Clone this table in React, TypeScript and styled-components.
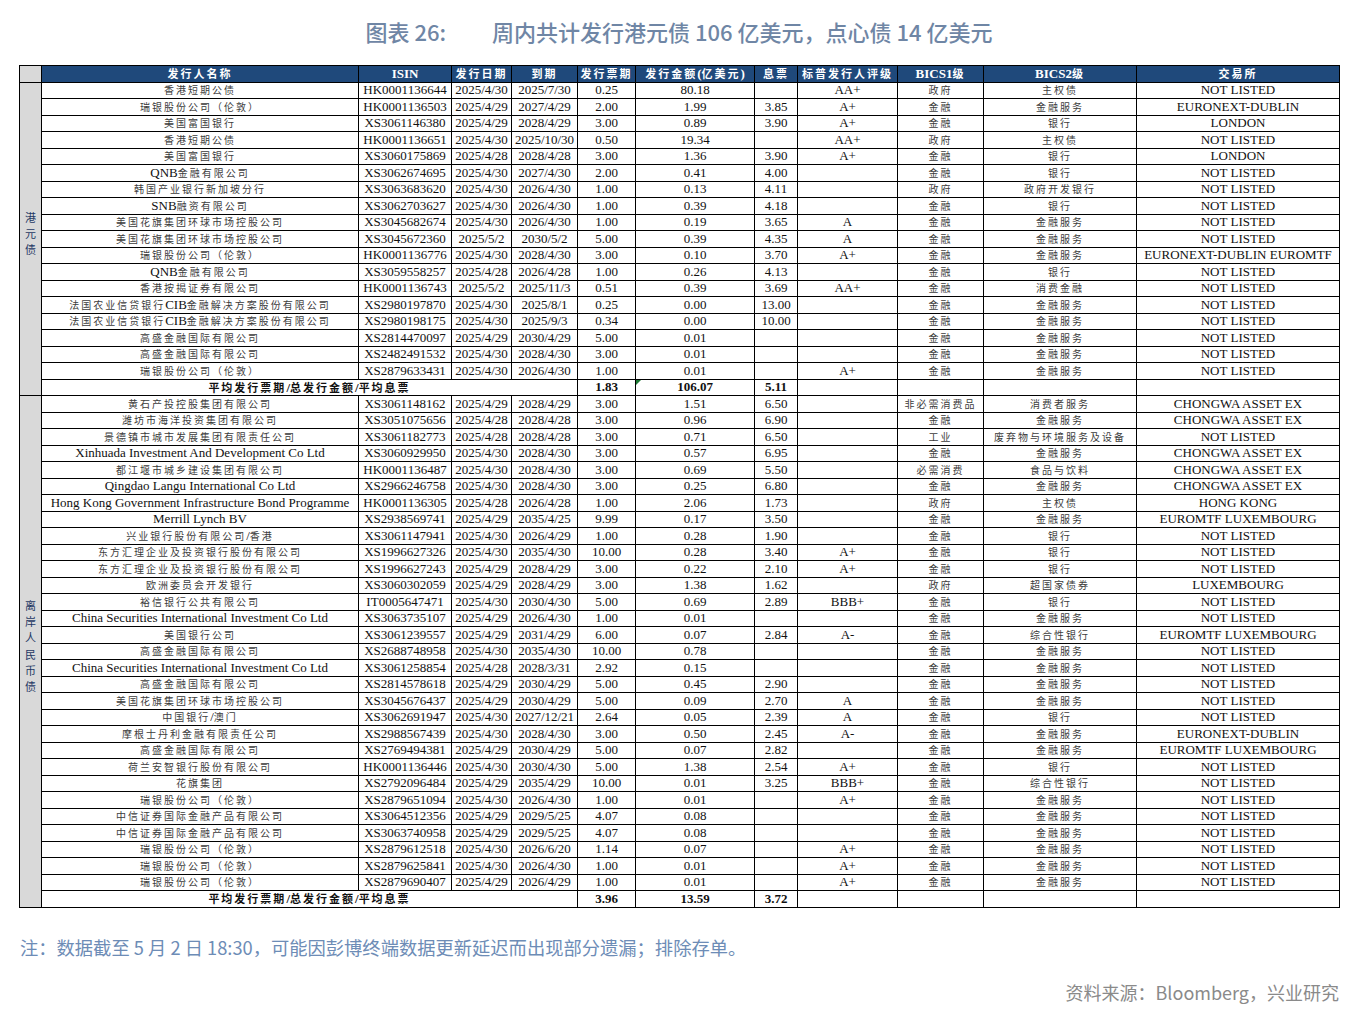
import React from "react";
import styled, { createGlobalStyle } from "styled-components";

const GlobalStyle = createGlobalStyle`
  html, body { margin: 0; padding: 0; background: #ffffff; }
  * { box-sizing: border-box; }
`;

const Page = styled.div`
  width: 1354px;
  padding: 0 15px 0 19px;
  display: flex;
  flex-direction: column;
`;

const Title = styled.div`
  display: flex;
  justify-content: center;
  gap: 46px;
  padding-top: 16px;
  line-height: 30px;
  height: 46px;
  font-family: "Noto Sans CJK SC", "Noto Sans", sans-serif;
  font-size: 22px;
  font-weight: 500;
  color: #6f86a5;
  white-space: pre;
`;

const Table = styled.table`
  margin-top: 19px;
  width: 1320px;
  border-collapse: collapse;
  table-layout: fixed;
  font-family: "Liberation Serif", "Times New Roman", serif;
  font-size: 13px;
  color: #111;
`;

const Row = styled.tr`
  height: 16.5px;
`;

const Th = styled.th<{ $corner?: boolean }>`
  border: 1px solid #000;
  background: ${(p) => (p.$corner ? "#d9d9d9" : "#1f497b")};
  color: #fff;
  font-weight: 700;
  padding: 0;
  line-height: 14px;
  text-align: center;
  white-space: nowrap;
  overflow: hidden;
`;

const Td = styled.td<{ $bold?: boolean }>`
  position: relative;
  border: 1px solid #000;
  padding: 0;
  line-height: 14px;
  text-align: center;
  white-space: nowrap;
  overflow: hidden;
  font-weight: ${(p) => (p.$bold ? 700 : 400)};
`;

const CatCell = styled.td`
  border: 1px solid #000;
  background: #d9d9d9;
  padding: 0;
  text-align: center;
  vertical-align: middle;
`;

const CatLabel = styled.span`
  display: inline-block;
  writing-mode: vertical-rl;
  text-orientation: upright;
  font-family: "Noto Sans CJK SC", sans-serif;
  font-size: 11px;
  letter-spacing: 5.3px;
  color: #1f3864;
  line-height: 12px;
`;

const Cjk = styled.span<{ $head?: boolean }>`
  font-family: "Noto Sans CJK SC", sans-serif;
  font-size: ${(p) => (p.$head ? "11px" : "10px")};
  letter-spacing: 2px;
  color: ${(p) => (p.$head ? "inherit" : "#3c3c3c")};
`;

const Flag = styled.span`
  position: absolute;
  top: 0;
  left: 0;
  width: 0;
  height: 0;
  border-top: 5px solid #1d7a34;
  border-right: 5px solid transparent;
`;

const Note = styled.div`
  margin-top: 27px;
  line-height: 24px;
  font-family: "Noto Sans CJK SC", "Noto Sans", sans-serif;
  font-size: 18.3px;
  color: #6d8cb6;
  padding-left: 1px;
`;

const Source = styled.div`
  margin-top: 21px;
  line-height: 24px;
  text-align: right;
  font-family: "Noto Sans CJK SC", "Noto Sans", sans-serif;
  font-size: 18px;
  color: #8a8a8a;
`;

const CJK_RE = /([\u3000-\u303f\u3400-\u9fff\uff00-\uffef]+)/;

function Mixed({ text, head }: { text: string; head?: boolean }) {
  const parts = text.split(CJK_RE);
  return (
    <>
      {parts.map((p, i) =>
        i % 2 === 1 ? (
          <Cjk key={i} $head={head}>
            {p}
          </Cjk>
        ) : (
          <React.Fragment key={i}>{p}</React.Fragment>
        )
      )}
    </>
  );
}

type R = [string, string, string, string, string, string, string, string, string, string, string];

const hk: R[] = [
  ["香港短期公债", "HK0001136644", "2025/4/30", "2025/7/30", "0.25", "80.18", "", "AA+", "政府", "主权债", "NOT LISTED"],
  ["瑞银股份公司（伦敦）", "HK0001136503", "2025/4/29", "2027/4/29", "2.00", "1.99", "3.85", "A+", "金融", "金融服务", "EURONEXT-DUBLIN"],
  ["美国富国银行", "XS3061146380", "2025/4/29", "2028/4/29", "3.00", "0.89", "3.90", "A+", "金融", "银行", "LONDON"],
  ["香港短期公债", "HK0001136651", "2025/4/30", "2025/10/30", "0.50", "19.34", "", "AA+", "政府", "主权债", "NOT LISTED"],
  ["美国富国银行", "XS3060175869", "2025/4/28", "2028/4/28", "3.00", "1.36", "3.90", "A+", "金融", "银行", "LONDON"],
  ["QNB金融有限公司", "XS3062674695", "2025/4/30", "2027/4/30", "2.00", "0.41", "4.00", "", "金融", "银行", "NOT LISTED"],
  ["韩国产业银行新加坡分行", "XS3063683620", "2025/4/30", "2026/4/30", "1.00", "0.13", "4.11", "", "政府", "政府开发银行", "NOT LISTED"],
  ["SNB融资有限公司", "XS3062703627", "2025/4/30", "2026/4/30", "1.00", "0.39", "4.18", "", "金融", "银行", "NOT LISTED"],
  ["美国花旗集团环球市场控股公司", "XS3045682674", "2025/4/30", "2026/4/30", "1.00", "0.19", "3.65", "A", "金融", "金融服务", "NOT LISTED"],
  ["美国花旗集团环球市场控股公司", "XS3045672360", "2025/5/2", "2030/5/2", "5.00", "0.39", "4.35", "A", "金融", "金融服务", "NOT LISTED"],
  ["瑞银股份公司（伦敦）", "HK0001136776", "2025/4/30", "2028/4/30", "3.00", "0.10", "3.70", "A+", "金融", "金融服务", "EURONEXT-DUBLIN EUROMTF"],
  ["QNB金融有限公司", "XS3059558257", "2025/4/28", "2026/4/28", "1.00", "0.26", "4.13", "", "金融", "银行", "NOT LISTED"],
  ["香港按揭证券有限公司", "HK0001136743", "2025/5/2", "2025/11/3", "0.51", "0.39", "3.69", "AA+", "金融", "消费金融", "NOT LISTED"],
  ["法国农业信贷银行CIB金融解决方案股份有限公司", "XS2980197870", "2025/4/30", "2025/8/1", "0.25", "0.00", "13.00", "", "金融", "金融服务", "NOT LISTED"],
  ["法国农业信贷银行CIB金融解决方案股份有限公司", "XS2980198175", "2025/4/30", "2025/9/3", "0.34", "0.00", "10.00", "", "金融", "金融服务", "NOT LISTED"],
  ["高盛金融国际有限公司", "XS2814470097", "2025/4/29", "2030/4/29", "5.00", "0.01", "", "", "金融", "金融服务", "NOT LISTED"],
  ["高盛金融国际有限公司", "XS2482491532", "2025/4/30", "2028/4/30", "3.00", "0.01", "", "", "金融", "金融服务", "NOT LISTED"],
  ["瑞银股份公司（伦敦）", "XS2879633431", "2025/4/30", "2026/4/30", "1.00", "0.01", "", "A+", "金融", "金融服务", "NOT LISTED"],
];

const cnh: R[] = [
  ["黄石产投控股集团有限公司", "XS3061148162", "2025/4/29", "2028/4/29", "3.00", "1.51", "6.50", "", "非必需消费品", "消费者服务", "CHONGWA ASSET EX"],
  ["潍坊市海洋投资集团有限公司", "XS3051075656", "2025/4/28", "2028/4/28", "3.00", "0.96", "6.90", "", "金融", "金融服务", "CHONGWA ASSET EX"],
  ["景德镇市城市发展集团有限责任公司", "XS3061182773", "2025/4/28", "2028/4/28", "3.00", "0.71", "6.50", "", "工业", "废弃物与环境服务及设备", "NOT LISTED"],
  ["Xinhuada Investment And Development Co Ltd", "XS3060929950", "2025/4/30", "2028/4/30", "3.00", "0.57", "6.95", "", "金融", "金融服务", "CHONGWA ASSET EX"],
  ["都江堰市城乡建设集团有限公司", "HK0001136487", "2025/4/30", "2028/4/30", "3.00", "0.69", "5.50", "", "必需消费", "食品与饮料", "CHONGWA ASSET EX"],
  ["Qingdao Langu International Co Ltd", "XS2966246758", "2025/4/30", "2028/4/30", "3.00", "0.25", "6.80", "", "金融", "金融服务", "CHONGWA ASSET EX"],
  ["Hong Kong Government Infrastructure Bond Programme", "HK0001136305", "2025/4/28", "2026/4/28", "1.00", "2.06", "1.73", "", "政府", "主权债", "HONG KONG"],
  ["Merrill Lynch BV", "XS2938569741", "2025/4/29", "2035/4/25", "9.99", "0.17", "3.50", "", "金融", "金融服务", "EUROMTF LUXEMBOURG"],
  ["兴业银行股份有限公司/香港", "XS3061147941", "2025/4/30", "2026/4/29", "1.00", "0.28", "1.90", "", "金融", "银行", "NOT LISTED"],
  ["东方汇理企业及投资银行股份有限公司", "XS1996627326", "2025/4/30", "2035/4/30", "10.00", "0.28", "3.40", "A+", "金融", "银行", "NOT LISTED"],
  ["东方汇理企业及投资银行股份有限公司", "XS1996627243", "2025/4/29", "2028/4/29", "3.00", "0.22", "2.10", "A+", "金融", "银行", "NOT LISTED"],
  ["欧洲委员会开发银行", "XS3060302059", "2025/4/29", "2028/4/29", "3.00", "1.38", "1.62", "", "政府", "超国家债券", "LUXEMBOURG"],
  ["裕信银行公共有限公司", "IT0005647471", "2025/4/30", "2030/4/30", "5.00", "0.69", "2.89", "BBB+", "金融", "银行", "NOT LISTED"],
  ["China Securities International Investment Co Ltd", "XS3063735107", "2025/4/29", "2026/4/30", "1.00", "0.01", "", "", "金融", "金融服务", "NOT LISTED"],
  ["美国银行公司", "XS3061239557", "2025/4/29", "2031/4/29", "6.00", "0.07", "2.84", "A-", "金融", "综合性银行", "EUROMTF LUXEMBOURG"],
  ["高盛金融国际有限公司", "XS2688748958", "2025/4/30", "2035/4/30", "10.00", "0.78", "", "", "金融", "金融服务", "NOT LISTED"],
  ["China Securities International Investment Co Ltd", "XS3061258854", "2025/4/28", "2028/3/31", "2.92", "0.15", "", "", "金融", "金融服务", "NOT LISTED"],
  ["高盛金融国际有限公司", "XS2814578618", "2025/4/29", "2030/4/29", "5.00", "0.45", "2.90", "", "金融", "金融服务", "NOT LISTED"],
  ["美国花旗集团环球市场控股公司", "XS3045676437", "2025/4/29", "2030/4/29", "5.00", "0.09", "2.70", "A", "金融", "金融服务", "NOT LISTED"],
  ["中国银行/澳门", "XS3062691947", "2025/4/30", "2027/12/21", "2.64", "0.05", "2.39", "A", "金融", "银行", "NOT LISTED"],
  ["摩根士丹利金融有限责任公司", "XS2988567439", "2025/4/30", "2028/4/30", "3.00", "0.50", "2.45", "A-", "金融", "金融服务", "EURONEXT-DUBLIN"],
  ["高盛金融国际有限公司", "XS2769494381", "2025/4/29", "2030/4/29", "5.00", "0.07", "2.82", "", "金融", "金融服务", "EUROMTF LUXEMBOURG"],
  ["荷兰安智银行股份有限公司", "HK0001136446", "2025/4/30", "2030/4/30", "5.00", "1.38", "2.54", "A+", "金融", "银行", "NOT LISTED"],
  ["花旗集团", "XS2792096484", "2025/4/29", "2035/4/29", "10.00", "0.01", "3.25", "BBB+", "金融", "综合性银行", "NOT LISTED"],
  ["瑞银股份公司（伦敦）", "XS2879651094", "2025/4/30", "2026/4/30", "1.00", "0.01", "", "A+", "金融", "金融服务", "NOT LISTED"],
  ["中信证券国际金融产品有限公司", "XS3064512356", "2025/4/29", "2029/5/25", "4.07", "0.08", "", "", "金融", "金融服务", "NOT LISTED"],
  ["中信证券国际金融产品有限公司", "XS3063740958", "2025/4/29", "2029/5/25", "4.07", "0.08", "", "", "金融", "金融服务", "NOT LISTED"],
  ["瑞银股份公司（伦敦）", "XS2879612518", "2025/4/30", "2026/6/20", "1.14", "0.07", "", "A+", "金融", "金融服务", "NOT LISTED"],
  ["瑞银股份公司（伦敦）", "XS2879625841", "2025/4/30", "2026/4/30", "1.00", "0.01", "", "A+", "金融", "金融服务", "NOT LISTED"],
  ["瑞银股份公司（伦敦）", "XS2879690407", "2025/4/29", "2026/4/29", "1.00", "0.01", "", "A+", "金融", "金融服务", "NOT LISTED"],
];

const widths = [22, 317, 93, 60, 66, 58, 119, 43, 100, 86, 153, 203];
const heads = ["发行人名称", "ISIN", "发行日期", "到期", "发行票期", "发行金额(亿美元)", "息票", "标普发行人评级", "BICS1级", "BICS2级", "交易所"];

function Section({
  label,
  rows,
  summary,
  flag,
}: {
  label: string;
  rows: R[];
  summary: [string, string, string];
  flag?: boolean;
}) {
  return (
    <>
      {rows.map((r, i) => (
        <Row key={i}>
          {i === 0 && (
            <CatCell rowSpan={rows.length + 1}>
              <CatLabel>{label}</CatLabel>
            </CatCell>
          )}
          {r.map((c, j) => (
            <Td key={j}>
              <Mixed text={c} />
            </Td>
          ))}
        </Row>
      ))}
      <Row>
        <Td colSpan={4} $bold>
          <Mixed text="平均发行票期/总发行金额/平均息票" head />
        </Td>
        <Td $bold>{summary[0]}</Td>
        <Td $bold>
          {flag && <Flag />}
          {summary[1]}
        </Td>
        <Td $bold>{summary[2]}</Td>
        <Td />
        <Td />
        <Td />
        <Td />
      </Row>
    </>
  );
}

export default function App() {
  return (
    <>
      <GlobalStyle />
      <Page>
        <Title>
          <span>图表 26:</span>
          <span>周内共计发行港元债 106 亿美元，点心债 14 亿美元</span>
        </Title>
        <Table>
          <colgroup>
            {widths.map((w, i) => (
              <col key={i} style={{ width: w }} />
            ))}
          </colgroup>
          <thead>
            <Row>
              <Th $corner />
              {heads.map((h, i) => (
                <Th key={i}>
                  <Mixed text={h} head />
                </Th>
              ))}
            </Row>
          </thead>
          <tbody>
            <Section label="港元债" rows={hk} summary={["1.83", "106.07", "5.11"]} flag />
            <Section label="离岸人民币债" rows={cnh} summary={["3.96", "13.59", "3.72"]} />
          </tbody>
        </Table>
        <Note>注：数据截至 5 月 2 日 18:30，可能因彭博终端数据更新延迟而出现部分遗漏；排除存单。</Note>
        <Source>资料来源：Bloomberg，兴业研究</Source>
      </Page>
    </>
  );
}
